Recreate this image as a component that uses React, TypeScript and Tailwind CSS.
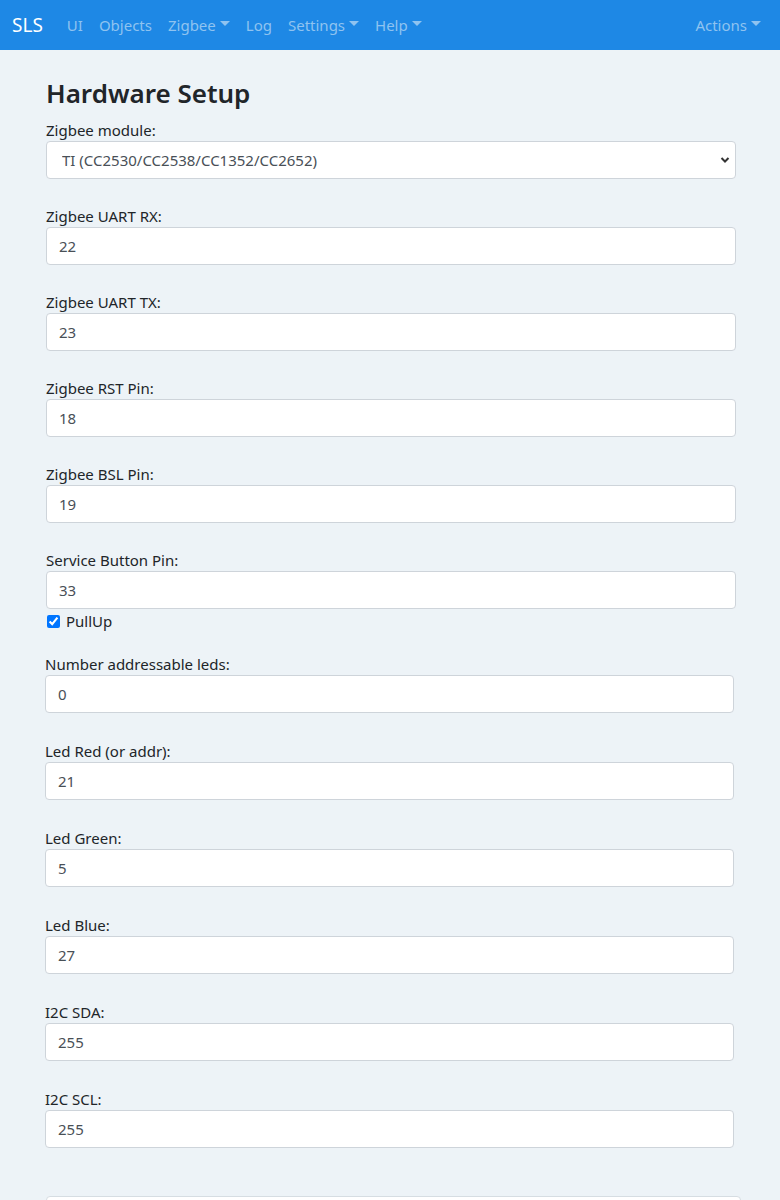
import React from 'react';

const font = { fontFamily: '"Noto Sans", "Open Sans", sans-serif' };

function Caret() {
    return <span className="ml-[4px] inline-block align-middle border-x-[5px] border-x-transparent border-t-[5px] border-t-current mb-[3px]" />;
}

function NavLink({ label, dropdown }: { label: string; dropdown?: boolean }) {
    return (
        <span className="px-[8px] text-[#8fc3f0] text-[15px] flex items-center">
            {label}
            {dropdown && <Caret />}
        </span>
    );
}

function Field({ label, value }: { label: string; value: string }) {
    return (
        <div className="mb-[26px]">
            <label className="block text-[15px] leading-[22px] text-[#212529]">{label}</label>
            <input
                readOnly
                value={value}
                className="block w-full h-[38px] px-[12px] rounded-[4px] border border-[#ced4da] bg-white text-[15px] text-[#495057] outline-none"
                style={font}
            />
        </div>
    );
}

export default function App() {
    const first = [
        ['Zigbee UART RX:', '22'],
        ['Zigbee UART TX:', '23'],
        ['Zigbee RST Pin:', '18'],
        ['Zigbee BSL Pin:', '19'],
    ];
    const second = [
        ['Number addressable leds:', '0'],
        ['Led Red (or addr):', '21'],
        ['Led Green:', '5'],
        ['Led Blue:', '27'],
        ['I2C SDA:', '255'],
        ['I2C SCL:', '255'],
    ];

    return (
        <div className="min-h-[1200px] bg-[#edf3f7] text-[#212529]" style={font}>
            <nav className="h-[50px] bg-[#1e88e5] flex items-center pl-[12px] pr-[11px]">
                <span className="text-white text-[19px] mr-[16px]">SLS</span>
                <div className="flex items-center">
                    <NavLink label="UI" />
                    <NavLink label="Objects" />
                    <NavLink label="Zigbee" dropdown />
                    <NavLink label="Log" />
                    <NavLink label="Settings" dropdown />
                    <NavLink label="Help" dropdown />
                </div>
                <div className="ml-auto">
                    <NavLink label="Actions" dropdown />
                </div>
            </nav>

            <div className="pt-[26px]">
                <div className="ml-[46px] w-[690px]">
                    <h3 className="text-[26px] font-semibold leading-[34px] mb-[9px]">Hardware Setup</h3>
                    <div className="mb-[26px]">
                        <label className="block text-[15px] leading-[22px]">Zigbee module:</label>
                        <div className="relative">
                            <select
                                className="block w-full h-[38px] pl-[15px] pr-[30px] rounded-[4px] border border-[#ced4da] bg-white text-[15px] text-[#495057] appearance-none outline-none"
                                style={font}
                                defaultValue="ti"
                            >
                                <option value="ti">TI (CC2530/CC2538/CC1352/CC2652)</option>
                            </select>
                            <svg className="absolute right-[6px] top-[14px] w-[10px] h-[10px] pointer-events-none" viewBox="0 0 10 10">
                                <path d="M1.5 3 L5 6.5 L8.5 3" fill="none" stroke="#333" strokeWidth="2" />
                            </svg>
                        </div>
                    </div>
                    {first.map(([l, v]) => (
                        <Field key={l} label={l} value={v} />
                    ))}
                    <div>
                        <label className="block text-[15px] leading-[22px]">Service Button Pin:</label>
                        <input
                            readOnly
                            value="33"
                            className="block w-full h-[38px] px-[12px] rounded-[4px] border border-[#ced4da] bg-white text-[15px] text-[#495057] outline-none"
                            style={font}
                        />
                        <label className="flex items-center h-[24px] text-[15px]">
                            <input type="checkbox" checked readOnly className="ml-[1px] mr-[6px] w-[13px] h-[13px]" />
                            PullUp
                        </label>
                    </div>
                </div>

                <div className="ml-[45px] w-[689px] mt-[20px]">
                    {second.map(([l, v]) => (
                        <div key={l} className="mb-[27px]">
                            <label className="block text-[15px] leading-[22px]">{l}</label>
                            <input
                                readOnly
                                value={v}
                                className="block w-full h-[38px] px-[12px] rounded-[4px] border border-[#ced4da] bg-white text-[15px] text-[#495057] outline-none"
                                style={font}
                            />
                        </div>
                    ))}
                </div>
                <div className="ml-[46px] w-[695px] mt-[48px] h-[40px] rounded-[4px] border border-[#d6dde2] bg-white" />
            </div>
        </div>
    );
}
